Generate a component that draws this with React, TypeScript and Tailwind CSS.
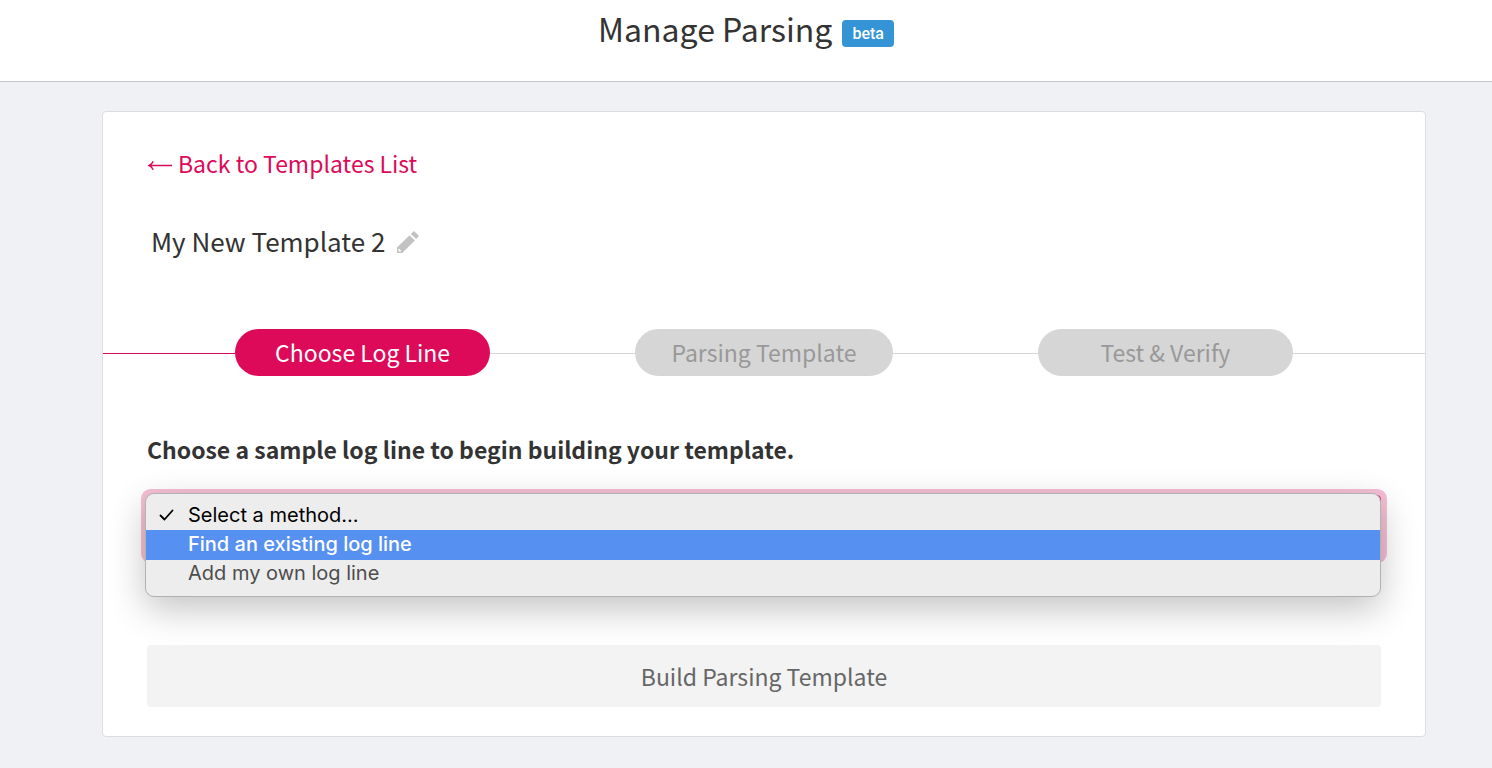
import { useState } from "react";
import clsx from "clsx";

const steps = ["Choose Log Line", "Parsing Template", "Test & Verify"];
const methods = ["Select a method...", "Find an existing log line", "Add my own log line"];

function ArrowIcon() {
  return (
    <svg viewBox="0 0 25 12" className="mt-1 h-3 w-[25px] fill-none stroke-current" strokeWidth="1.5" aria-hidden="true">
      <path d="M2.2 6.5H25M6.2 2.2Q5 5.2 2.2 6.5Q5 7.8 6.2 10.8" />
    </svg>
  );
}

function PencilIcon() {
  return (
    <svg viewBox="0 0 22 22" className="size-[22px] fill-[#c2c2c2]" aria-hidden="true">
      <path
        fillRule="evenodd"
        d="M0 22V16.6L12.6 4.2L17.8 9.4L5.2 22ZM1.5 18.2V20.5H3.8L4.4 19.9L2.1 17.6Z"
      />
      <path d="M13.9 2.9L16.4 0.5Q17 0 17.6 0.5L21.5 4.4Q22 5 21.5 5.6L19.1 8.1Z" />
    </svg>
  );
}

function Steps({ current }: { current: number }) {
  return (
    <ol className="flex items-center">
      {steps.map((step, i) => (
        <li key={step} className="contents">
          <span
            className={clsx(
              "h-[3px] border-b",
              i === 0 ? "flex-[10]" : "flex-[11]",
              i <= current ? "border-[#dd0a5a]" : "border-[#d6d6d6]",
            )}
          />
          <span
            className={clsx(
              "flex h-[47px] min-w-[255px] items-center justify-center rounded-full px-9 pb-0.5 text-[23px] leading-8",
              i <= current ? "bg-[#dd0a5a] text-white" : "bg-[#d6d6d6] text-[#999999]",
            )}
          >
            {step}
          </span>
        </li>
      ))}
      <li className="h-[3px] flex-[10] border-b border-[#d6d6d6]" aria-hidden="true" />
    </ol>
  );
}

function MethodSelect() {
  const [selected, setSelected] = useState(0);
  const [active, setActive] = useState(1);
  return (
    <div className="relative">
      <select
        id="method"
        value={selected}
        onChange={(e) => setSelected(Number(e.target.value))}
        className="block h-[62px] w-full appearance-none rounded border border-[#dd0a5a] bg-white px-4 text-[23px] ring-6 ring-[#f5bfd4] outline-none"
      >
        {methods.map((m, i) => (
          <option key={m} value={i}>
            {m}
          </option>
        ))}
      </select>
      <div
        role="listbox"
        aria-label="Method"
        className="absolute -top-0.5 right-0 -left-0.5 rounded-[9px] border border-[#b3b0b1] bg-[#eeeded] pt-1.5 pb-2 font-['Inter','Liberation_Sans',sans-serif] shadow-[0_12px_36px_rgba(0,0,0,0.24)]"
      >
        {methods.map((m, i) => (
          <button
            key={m}
            type="button"
            role="option"
            aria-selected={i === selected}
            onMouseEnter={() => setActive(i)}
            onClick={() => setSelected(i)}
            className={clsx(
              "flex w-full items-center pl-[13px] text-left text-[20px] leading-7",
              i === active
                ? "h-[30px] bg-[#5690f0] pb-0.5 font-medium text-white"
                : i === selected
                  ? "h-[30px] text-black"
                  : "h-7 pb-0.5 text-[#4d4d4d]",
            )}
          >
            <span className="w-[29px]">
              {i === selected && (
                <svg viewBox="0 0 16 14" className="h-3.5 w-4 fill-none stroke-current" strokeWidth="1.8" aria-hidden="true">
                  <path d="M1.5 7.5L5.5 11.5L13.5 2.5" strokeLinecap="round" strokeLinejoin="round" />
                </svg>
              )}
            </span>
            {m}
          </button>
        ))}
      </div>
    </div>
  );
}

export default function App() {
  return (
    <div className="min-h-screen bg-[#f0f1f4] font-['Noto_Sans_CJK_SC','Noto_Sans',sans-serif] text-[#333333]">
      <header className="flex h-[82px] items-start justify-center gap-2.5 border-b border-[#c3c6ca] bg-white pt-2">
        <h1 className="text-[32px] leading-10">Manage Parsing</h1>
        <span className="mt-3 rounded bg-[#3594d6] px-2.5 font-['Roboto',sans-serif] text-[16px] leading-[27px] font-medium text-white">
          beta
        </span>
      </header>
      <main className="pt-[29px] pr-[66px] pb-[31px] pl-[102px]">
        <section className="rounded border border-[#dcdddf] bg-white pb-[29px]">
          <div className="px-11 pt-[35px]">
            <a href="#templates" className="inline-flex items-center gap-1.5 text-[23px] leading-8 text-[#dd0a5a]">
              <ArrowIcon />
              Back to Templates List
            </a>
            <div className="mt-11 flex items-center gap-3 pl-1">
              <h2 className="pb-0.5 text-[26px] leading-9">My New Template 2</h2>
              <button type="button" aria-label="Edit template name">
                <PencilIcon />
              </button>
            </div>
          </div>
          <div className="mt-[68px]">
            <Steps current={0} />
          </div>
          <form className="px-11 pt-[57px]" onSubmit={(e) => e.preventDefault()}>
            <label htmlFor="method" className="mb-[30px] block text-[23px] leading-8 font-bold">
              Choose a sample log line to begin building your template.
            </label>
            <MethodSelect />
            <button
              type="submit"
              className="mt-[88px] block h-[62px] w-full rounded bg-[#f3f3f3] text-[23px] leading-8 text-[#666666]"
            >
              Build Parsing Template
            </button>
          </form>
        </section>
      </main>
    </div>
  );
}
